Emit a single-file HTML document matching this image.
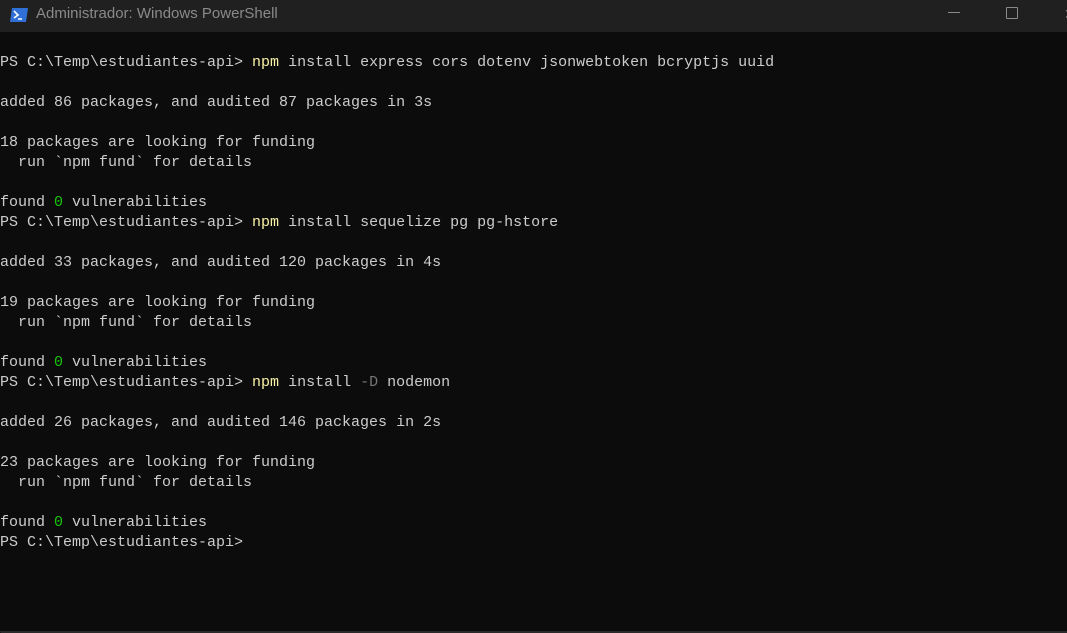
<!DOCTYPE html>
<html><head><meta charset="utf-8"><style>
html,body{margin:0;padding:0;width:1067px;height:633px;overflow:hidden;background:#0c0c0c;}
.title{position:absolute;left:0;top:0;width:1067px;height:32px;background:#202020;}
.ttext{position:absolute;left:36px;top:5px;font:15px "Liberation Sans",sans-serif;color:#8a8a8a;}
.term{position:absolute;left:0;top:53px;font:15px/20px "Liberation Mono",monospace;color:#cccccc;white-space:pre;}
.y{color:#f9f1a5}.g{color:#767676}.gr{color:#16c60c}
.bottom{position:absolute;left:0;top:631px;width:1067px;height:2px;background:#2b2b2b;border-bottom-left-radius:6px;}
</style></head><body>
<div class="title">
<svg style="position:absolute;left:9px;top:7px" width="20" height="16" viewBox="0 0 20 16"><path d="M3 1H19L17 15H1Z" fill="#2f6fd6"/><path d="M5 4L9 8L5 11" stroke="#fff" stroke-width="1.6" fill="none"/><path d="M9 12H13" stroke="#fff" stroke-width="1.5"/></svg>
<div class="ttext">Administrador: Windows PowerShell</div>
<div style="position:absolute;left:948px;top:12px;width:12px;height:1px;background:#8a8a8a"></div>
<div style="position:absolute;left:1006px;top:7px;width:10px;height:10px;border:1px solid #8a8a8a;border-radius:1px"></div>
<div style="position:absolute;left:1064px;top:6px;width:3px;height:12px;color:#8a8a8a;font:14px sans-serif;overflow:hidden">✕</div>
</div>
<div class="term">PS C:\Temp\estudiantes-api&gt; <span class="y">npm</span> install express cors dotenv jsonwebtoken bcryptjs uuid

added 86 packages, and audited 87 packages in 3s

18 packages are looking for funding
  run `npm fund` for details

found <span class="gr">0</span> vulnerabilities
PS C:\Temp\estudiantes-api&gt; <span class="y">npm</span> install sequelize pg pg-hstore

added 33 packages, and audited 120 packages in 4s

19 packages are looking for funding
  run `npm fund` for details

found <span class="gr">0</span> vulnerabilities
PS C:\Temp\estudiantes-api&gt; <span class="y">npm</span> install <span class="g">-D</span> nodemon

added 26 packages, and audited 146 packages in 2s

23 packages are looking for funding
  run `npm fund` for details

found <span class="gr">0</span> vulnerabilities
PS C:\Temp\estudiantes-api&gt;</div>
<div class="bottom"></div>
</body></html>
